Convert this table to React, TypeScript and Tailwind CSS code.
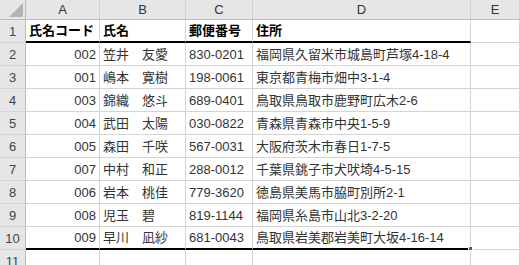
import React from 'react';

const rows = [
  { code: '氏名コード', name: '氏名', zip: '郵便番号', addr: '住所', head: true },
  { code: '002', name: '笠井　友愛', zip: '830-0201', addr: '福岡県久留米市城島町芦塚4-18-4' },
  { code: '001', name: '嶋本　寛樹', zip: '198-0061', addr: '東京都青梅市畑中3-1-4' },
  { code: '003', name: '錦織　悠斗', zip: '689-0401', addr: '鳥取県鳥取市鹿野町広木2-6' },
  { code: '004', name: '武田　太陽', zip: '030-0822', addr: '青森県青森市中央1-5-9' },
  { code: '005', name: '森田　千咲', zip: '567-0031', addr: '大阪府茨木市春日1-7-5' },
  { code: '007', name: '中村　和正', zip: '288-0012', addr: '千葉県銚子市犬吠埼4-5-15' },
  { code: '006', name: '岩本　桃佳', zip: '779-3620', addr: '徳島県美馬市脇町別所2-1' },
  { code: '008', name: '児玉　碧', zip: '819-1144', addr: '福岡県糸島市山北3-2-20' },
  { code: '009', name: '早川　凪紗', zip: '681-0043', addr: '鳥取県岩美郡岩美町大坂4-16-14' },
];

const cols = 'grid grid-cols-[26px_74px_86px_67px_218px_1fr]';
const rowHead = 'flex items-center justify-center bg-[#e6e6e6] border-r border-b border-r-[#bcbcbc] border-b-[#d4d4d4] text-[#444]';

const App: React.FC = () => {
  return (
    <div
      className="w-[520px] h-[265px] overflow-hidden bg-white text-[13px] leading-none"
      style={{ fontFamily: '"Liberation Sans", "Noto Sans CJK JP", sans-serif' }}
    >
      {/* column headers */}
      <div className={`${cols} h-[20px] bg-[#e6e6e6] text-[#333]`}>
        <div className="relative border-r border-b border-[#bcbcbc]">
          <div className="absolute right-[2px] bottom-[2px] w-0 h-0 border-l-[14px] border-l-transparent border-b-[14px] border-b-[#b4b4b4]" />
        </div>
        {['A', 'B', 'C', 'D', 'E'].map((c) => (
          <div key={c} className="flex items-center justify-center border-r border-b border-r-[#d0d0d0] border-b-[#bcbcbc]">
            {c}
          </div>
        ))}
      </div>

      {rows.map((r, i) => {
        const thick = i === 0 || i === rows.length - 1;
        const cell = `flex items-center h-full border-r border-[#d4d4d4] ${thick ? 'border-b-2 border-b-black' : 'border-b'}`;
        const text = r.head ? 'font-bold text-black' : 'text-[#333]';
        return (
          <div key={i} className={`${cols} h-[23px]`}>
            <div className={rowHead}>{i + 1}</div>
            <div className={`${cell} ${text} ${r.head ? 'px-[3px]' : 'justify-end pr-[3px]'}`}>{r.code}</div>
            <div className={`${cell} ${text} px-[3px]`}>{r.name}</div>
            <div className={`${cell} ${text} px-[3px]`}>{r.zip}</div>
            <div className={`${cell} ${text} px-[3px] relative`}>
              {r.addr}
              {i === rows.length - 1 && (
                <div className="absolute right-[-3px] bottom-[-3px] w-[5px] h-[5px] bg-[#3f5fa8] border border-white" />
              )}
            </div>
            <div className="border-r border-b border-[#d4d4d4]" />
          </div>
        );
      })}

      <div className={`${cols} h-[23px]`}>
        <div className={rowHead}>11</div>
        {[0, 1, 2, 3, 4].map((k) => (
          <div key={k} className="border-r border-b border-[#d4d4d4]" />
        ))}
      </div>
    </div>
  );
};

export default App;
